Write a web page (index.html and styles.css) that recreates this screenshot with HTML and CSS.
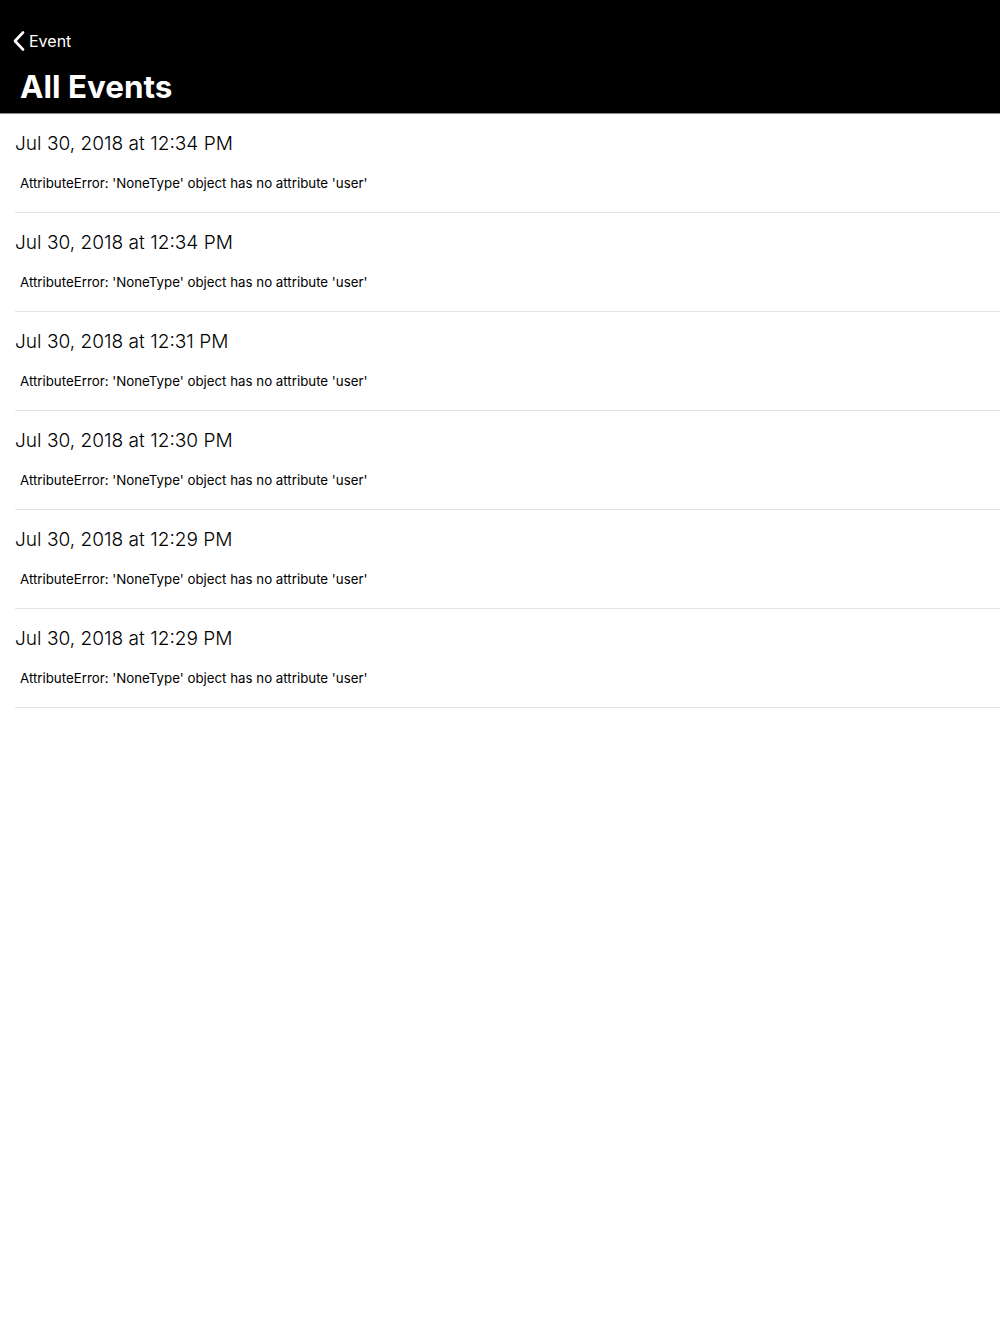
FILE: index.html
```html
<!DOCTYPE html>
<html>
<head>
	<meta charset="utf-8" />
	<title>All Events</title>
	<link rel="stylesheet" href="styles.css">
</head>
<body>
	<div class="navbar">
		<div class="back">
			<svg class="chevron" width="12" height="20" viewBox="0 0 12 20">
				<path d="M10 1.5 L2 10 L10 18.5" fill="none" stroke="#fff" stroke-width="2.6" stroke-linecap="round" stroke-linejoin="round" />
			</svg>
			<span>Event</span>
		</div>
		<div class="title">All Events</div>
	</div>
	<div class="list">
		<div class="row">
			<div class="date">Jul 30, 2018 at 12:34 PM</div>
			<div class="msg">AttributeError: 'NoneType' object has no attribute 'user'</div>
		</div>
		<div class="row">
			<div class="date">Jul 30, 2018 at 12:34 PM</div>
			<div class="msg">AttributeError: 'NoneType' object has no attribute 'user'</div>
		</div>
		<div class="row">
			<div class="date">Jul 30, 2018 at 12:31 PM</div>
			<div class="msg">AttributeError: 'NoneType' object has no attribute 'user'</div>
		</div>
		<div class="row">
			<div class="date">Jul 30, 2018 at 12:30 PM</div>
			<div class="msg">AttributeError: 'NoneType' object has no attribute 'user'</div>
		</div>
		<div class="row">
			<div class="date">Jul 30, 2018 at 12:29 PM</div>
			<div class="msg">AttributeError: 'NoneType' object has no attribute 'user'</div>
		</div>
		<div class="row">
			<div class="date">Jul 30, 2018 at 12:29 PM</div>
			<div class="msg">AttributeError: 'NoneType' object has no attribute 'user'</div>
		</div>
	</div>
</body>
</html>
```

FILE: styles.css
```css
body {
	margin: 0;
	background: #fff;
	font-family: Inter, "Liberation Sans", sans-serif;
	color: #000;
}

.navbar {
	background: #000;
	color: #fff;
	height: 114px;
	box-sizing: border-box;
	padding-top: 31px;
	border-bottom: 1px solid #8a8a8a;
}

.back {
	display: flex;
	align-items: center;
	height: 20px;
	padding-left: 13px;
	font-size: 16px;
}

.chevron {
	margin-right: 4px;
}

.title {
	margin-top: 17px;
	padding-left: 20px;
	font-size: 31.4px;
	font-weight: 700;
	line-height: 38px;
}

.list {
	padding-left: 15px;
}

.row {
	height: 99px;
	box-sizing: border-box;
	border-bottom: 1px solid #e3e3e3;
	padding-top: 17px;
}

.date {
	font-size: 19.1px;
	font-weight: 300;
	line-height: 24px;
}

.msg {
	margin-top: 20px;
	padding-left: 5px;
	font-size: 13.3px;
	line-height: 17px;
}
```
